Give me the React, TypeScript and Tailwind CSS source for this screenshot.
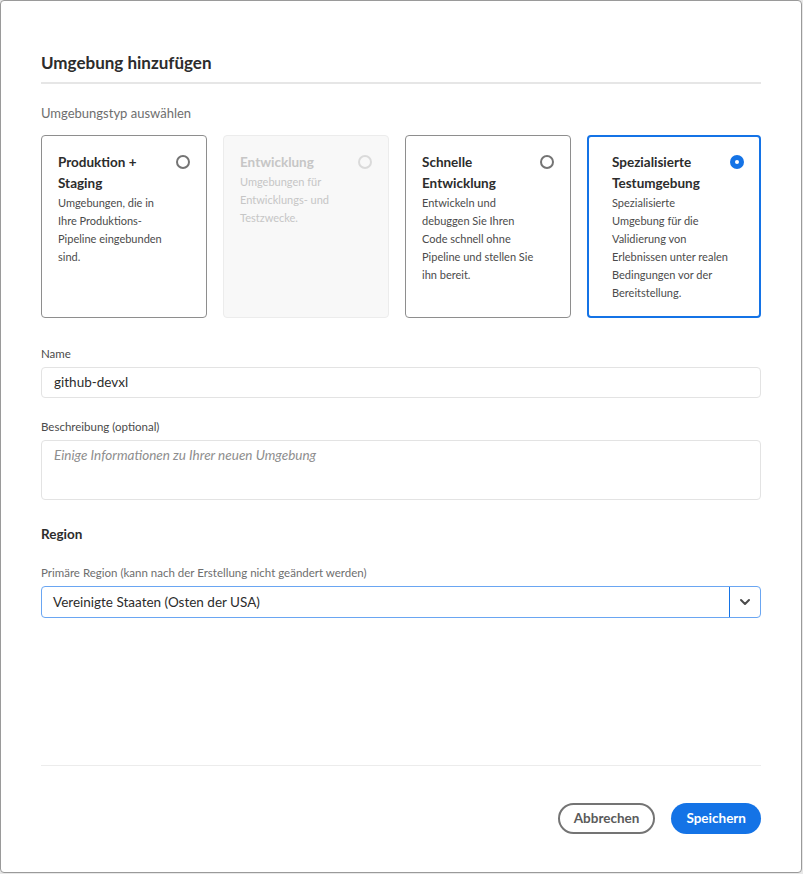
import React from 'react';
import { ChevronDown } from 'lucide-react';

type EnvType = {
  id: string;
  title: string;
  description: string;
  disabled?: boolean;
};

const envTypes: EnvType[] = [
  {
    id: 'prod',
    title: 'Produktion + Staging',
    description: 'Umgebungen, die in Ihre Produktions-Pipeline eingebunden sind.',
  },
  {
    id: 'dev',
    title: 'Entwicklung',
    description: 'Umgebungen für Entwicklungs- und Testzwecke.',
    disabled: true,
  },
  {
    id: 'rde',
    title: 'Schnelle Entwicklung',
    description: 'Entwickeln und debuggen Sie Ihren Code schnell ohne Pipeline und stellen Sie ihn bereit.',
  },
  {
    id: 'special',
    title: 'Spezialisierte Testumgebung',
    description:
      'Spezialisierte Umgebung für die Validierung von Erlebnissen unter realen Bedingungen vor der Bereitstellung.',
  },
];

function Radio({ checked, disabled }: { checked: boolean; disabled?: boolean }) {
  if (checked) {
    return (
      <span className="flex h-[14px] w-[14px] shrink-0 items-center justify-center rounded-full bg-[#1473e6]">
        <span className="block h-[4px] w-[4px] rounded-full bg-white" />
      </span>
    );
  }
  return (
    <span
      className={`block h-[14px] w-[14px] shrink-0 rounded-full border-2 ${
        disabled ? 'border-[#dadada]' : 'border-[#747474]'
      }`}
    />
  );
}

function TypeCard({ env, selected }: { env: EnvType; selected: boolean }) {
  const border = env.disabled
    ? 'border border-[#ececec] bg-[#f8f8f8] pl-[16px] pr-[16px] pt-[16px]'
    : selected
    ? 'border-2 border-[#1473e6] bg-white pl-[23px] pr-[15px] pt-[15px]'
    : 'border border-[#8e8e8e] bg-white pl-[16px] pr-[16px] pt-[16px]';

  return (
    <div className={`h-[183px] rounded-[4px] ${border}`}>
      <div className="flex items-start justify-between">
        <div>
          <h3
            className={`text-[13.5px] font-bold leading-[21px] ${
              env.disabled ? 'text-[#c6c6c6]' : 'text-[#2c2c2c]'
            }`}
          >
            {env.title}
          </h3>
          <p
            className={`text-[11px] leading-[18px] ${
              env.disabled ? 'text-[#c6c6c6]' : 'text-[#4b4b4b]'
            }`}
          >
            {env.description}
          </p>
        </div>
        <div className={`pt-[3px] ${selected ? 'pl-0' : 'pl-[5px]'}`}>
          <Radio checked={selected} disabled={env.disabled} />
        </div>
      </div>
    </div>
  );
}

export default function App() {
  const [selected, setSelected] = React.useState('special');

  return (
    <div className="h-[874px] w-[803px] bg-[#e8e8e8] font-['Lato','Liberation_Sans',sans-serif]">
      <div className="flex h-[873px] w-[802px] flex-col rounded-[4px] border border-[#9a9a9a] bg-white px-[40px]">
        <h2 className="mt-[50px] text-[17px] font-bold leading-[24px] text-[#2c2c2c]">Umgebung hinzufügen</h2>
        <div className="mt-[7px] h-[2px] bg-[#e6e6e6]" />

        <p className="mt-[19px] text-[13px] leading-[20px] text-[#6e6e6e]">Umgebungstyp auswählen</p>

        <div className="mt-[12px] grid grid-cols-[166px_166px_166px_1fr] gap-4">
          {envTypes.map((env) => (
            <div key={env.id} onClick={() => !env.disabled && setSelected(env.id)}>
              <TypeCard env={env} selected={selected === env.id} />
            </div>
          ))}
        </div>

        <label className="mt-[28px] text-[11.5px] leading-[16px] text-[#4b4b4b]">Name</label>
        <div className="mt-[5px] flex h-[31px] items-center rounded-[4px] border border-[#e3e3e3] px-[12px] text-[13.5px] text-[#2c2c2c]">
          github-devxl
        </div>

        <label className="mt-[21px] text-[11.5px] leading-[16px] text-[#4b4b4b]">Beschreibung (optional)</label>
        <div className="mt-[5px] h-[60px] rounded-[4px] border border-[#e3e3e3] px-[12px] pt-[4px] text-[13.5px] italic text-[#8e8e8e]">
          Einige Informationen zu Ihrer neuen Umgebung
        </div>

        <h3 className="mt-[24px] text-[13.5px] font-bold leading-[20px] text-[#2c2c2c]">Region</h3>

        <label className="mt-[21px] text-[11.5px] leading-[16px] text-[#6e6e6e]">
          Primäre Region (kann nach der Erstellung nicht geändert werden)
        </label>
        <div className="mt-[5px] flex h-[32px] items-stretch rounded-[4px] border border-[#6aa6f2]">
          <div className="flex flex-1 items-center px-[11px] text-[13.5px] text-[#2c2c2c]">
            Vereinigte Staaten (Osten der USA)
          </div>
          <div className="flex w-[31px] items-center justify-center border-l border-[#1473e6]">
            <ChevronDown size={16} strokeWidth={3} className="text-[#4b4b4b]" />
          </div>
        </div>

        <div className="mt-[147px] h-px bg-[#ececec]" />

        <div className="mt-[37px] flex justify-end gap-4">
          <button
            type="button"
            className="h-[31px] rounded-full border-2 border-[#747474] px-[14px] text-[13.5px] font-bold text-[#5a5a5a]"
          >
            Abbrechen
          </button>
          <button
            type="button"
            className="h-[31px] rounded-full bg-[#1473e6] px-[15px] text-[13.5px] font-bold text-white"
          >
            Speichern
          </button>
        </div>
      </div>
    </div>
  );
}
